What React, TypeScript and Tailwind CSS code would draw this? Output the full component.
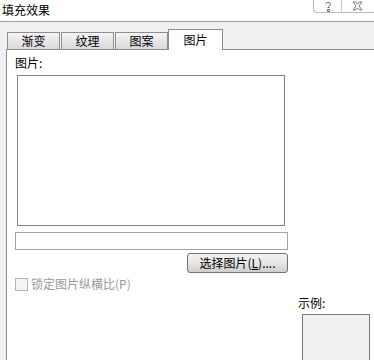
import React from "react";

const font = { fontFamily: '"Noto Sans CJK SC", "Noto Sans", sans-serif' };

function Tab({ label, selected, w }: { label: string; selected?: boolean; w: string }) {
  if (selected) {
    return (
      <div
        className={`relative z-10 -mb-px flex h-[21px] shrink-0 items-start justify-center border border-b-0 border-[#898c95] bg-white pt-[2px] text-[12px] leading-[16px] text-black ${w}`}
      >
        {label}
      </div>
    );
  }
  return (
    <div
      className={`flex h-[17px] shrink-0 items-center justify-center border border-b-0 border-[#8c8e94] bg-gradient-to-b from-[#f4f4f4] to-[#d9d9d9] text-[12px] leading-[16px] text-black ${w}`}
    >
      {label}
    </div>
  );
}

export default function App() {
  return (
    <div className="flex h-[360px] w-[374px] flex-col overflow-hidden bg-[#f0f0f0]" style={font}>
      {/* title bar */}
      <div className="flex h-[22px] shrink-0 items-start justify-between border-b border-[#a0a0a0] bg-white">
        <div className="pl-[2px] pt-[2px] text-[12px] leading-[16px] text-black">填充效果</div>
        <div className="-mr-[4px] flex h-[13px] rounded-bl-[4px] border border-t-0 border-[#b9b9b9] bg-white">
          <div className="flex w-[28px] items-center justify-center border-r border-[#c8c8c8]">
            <svg width="8" height="11" viewBox="0 0 8 11">
              <path
                d="M1.5 3 C1.5 0.8 6.5 0.8 6.5 3 C6.5 4.6 4.5 4.8 4.5 6.5 M3.5 6.5 L5.5 6.5 M3.5 8.5 h2 v2 h-2 z"
                fill="none"
                stroke="#6a6a6a"
                strokeWidth="1"
              />
            </svg>
          </div>
          <div className="flex w-[35px] items-center justify-center pr-[4px]">
            <svg width="11" height="10" viewBox="0 0 11 10">
              <path
                d="M1 1 L3.5 1 L5.5 3.2 L7.5 1 L10 1 L7 5 L10 9 L7.5 9 L5.5 6.8 L3.5 9 L1 9 L4 5 Z"
                fill="#fff"
                stroke="#6a6a6a"
                strokeWidth="0.9"
              />
            </svg>
          </div>
        </div>
      </div>

      {/* tabs */}
      <div className="flex h-[27px] shrink-0 items-end pl-[7px]">
        <Tab label="渐变" w="w-[53px]" />
        <Tab label="纹理" w="w-[53px] ml-px" />
        <Tab label="图案" w="w-[53px] ml-px" />
        <Tab label="图片" w="w-[55px]" selected />
      </div>

      {/* panel */}
      <div className="ml-[6px] flex min-h-0 flex-1 flex-col border-l border-t border-[#898c95] bg-white pl-[8px] pt-[5px]">
        <div className="shrink-0 text-[12px] leading-[16px] text-black">图片:</div>
        <div className="ml-[2px] mt-[4px] h-[151px] w-[268px] shrink-0 border border-[#828282] bg-white" />
        <div className="mt-[6px] h-[18px] w-[273px] shrink-0 border border-[#a3a3a3] bg-white" />
        <div className="flex w-[273px] shrink-0 justify-end">
          <div className="mt-[3px] flex h-[20px] w-[101px] items-center justify-center rounded-[3px] border border-[#707070] bg-gradient-to-b from-[#f4f4f4] via-[#e6e6e6] to-[#cfcfcf] text-[12px] leading-[16px] text-black">
            选择图片(<span className="underline">L</span>)....
          </div>
        </div>
        <div className="mt-[3px] flex h-[16px] shrink-0 items-center gap-[3px]">
          <div className="h-[13px] w-[13px] border border-[#b5b5b5] bg-[#f4f4f4]" />
          <span className="text-[12px] leading-[16px] text-[#9a9a9a]">锁定图片纵横比(P)</span>
        </div>
        <div className="ml-[283px] mt-[3px] flex shrink-0 flex-col">
          <div className="text-[12px] leading-[16px] text-black">示例:</div>
          <div className="ml-[4px] mt-[3px] h-[60px] w-[68px] border border-[#7a7a7a] bg-[#f0f0f0]" />
        </div>
      </div>
    </div>
  );
}
